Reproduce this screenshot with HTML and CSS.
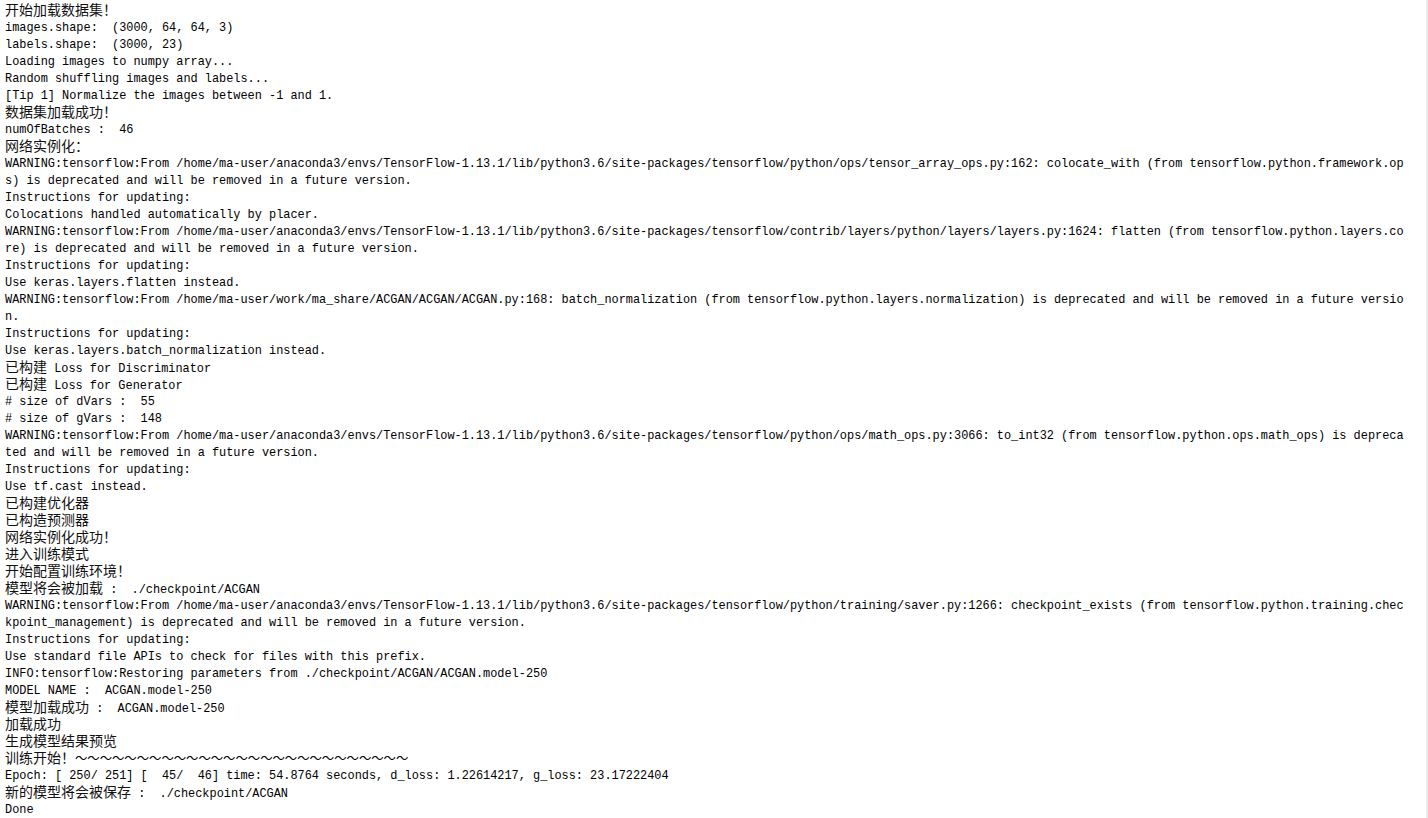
FILE: index.html
```html
<!DOCTYPE html>
<html lang="zh">
<head>
<meta charset="utf-8">
<title>Output</title>
<link rel="stylesheet" href="styles.css">
</head>
<body>
<div class="page">
  <div class="output">
    <div class="ln"><span class="zh">开始加载数据集！</span></div>
    <div class="ln">images.shape:  (3000, 64, 64, 3)</div>
    <div class="ln">labels.shape:  (3000, 23)</div>
    <div class="ln">Loading images to numpy array...</div>
    <div class="ln">Random shuffling images and labels...</div>
    <div class="ln">[Tip 1] Normalize the images between -1 and 1.</div>
    <div class="ln"><span class="zh">数据集加载成功！</span></div>
    <div class="ln">numOfBatches :  46</div>
    <div class="ln"><span class="zh">网络实例化：</span></div>
    <div class="ln">WARNING:tensorflow:From /home/ma-user/anaconda3/envs/TensorFlow-1.13.1/lib/python3.6/site-packages/tensorflow/python/ops/tensor_array_ops.py:162: colocate_with (from tensorflow.python.framework.op</div>
    <div class="ln">s) is deprecated and will be removed in a future version.</div>
    <div class="ln">Instructions for updating:</div>
    <div class="ln">Colocations handled automatically by placer.</div>
    <div class="ln">WARNING:tensorflow:From /home/ma-user/anaconda3/envs/TensorFlow-1.13.1/lib/python3.6/site-packages/tensorflow/contrib/layers/python/layers/layers.py:1624: flatten (from tensorflow.python.layers.co</div>
    <div class="ln">re) is deprecated and will be removed in a future version.</div>
    <div class="ln">Instructions for updating:</div>
    <div class="ln">Use keras.layers.flatten instead.</div>
    <div class="ln">WARNING:tensorflow:From /home/ma-user/work/ma_share/ACGAN/ACGAN/ACGAN.py:168: batch_normalization (from tensorflow.python.layers.normalization) is deprecated and will be removed in a future versio</div>
    <div class="ln">n.</div>
    <div class="ln">Instructions for updating:</div>
    <div class="ln">Use keras.layers.batch_normalization instead.</div>
    <div class="ln"><span class="zh">已构建</span> Loss for Discriminator</div>
    <div class="ln"><span class="zh">已构建</span> Loss for Generator</div>
    <div class="ln"># size of dVars :  55</div>
    <div class="ln"># size of gVars :  148</div>
    <div class="ln">WARNING:tensorflow:From /home/ma-user/anaconda3/envs/TensorFlow-1.13.1/lib/python3.6/site-packages/tensorflow/python/ops/math_ops.py:3066: to_int32 (from tensorflow.python.ops.math_ops) is depreca</div>
    <div class="ln">ted and will be removed in a future version.</div>
    <div class="ln">Instructions for updating:</div>
    <div class="ln">Use tf.cast instead.</div>
    <div class="ln"><span class="zh">已构建优化器</span></div>
    <div class="ln"><span class="zh">已构造预测器</span></div>
    <div class="ln"><span class="zh">网络实例化成功！</span></div>
    <div class="ln"><span class="zh">进入训练模式</span></div>
    <div class="ln"><span class="zh">开始配置训练环境！</span></div>
    <div class="ln"><span class="zh">模型将会被加载</span> :  ./checkpoint/ACGAN</div>
    <div class="ln">WARNING:tensorflow:From /home/ma-user/anaconda3/envs/TensorFlow-1.13.1/lib/python3.6/site-packages/tensorflow/python/training/saver.py:1266: checkpoint_exists (from tensorflow.python.training.chec</div>
    <div class="ln">kpoint_management) is deprecated and will be removed in a future version.</div>
    <div class="ln">Instructions for updating:</div>
    <div class="ln">Use standard file APIs to check for files with this prefix.</div>
    <div class="ln">INFO:tensorflow:Restoring parameters from ./checkpoint/ACGAN/ACGAN.model-250</div>
    <div class="ln">MODEL NAME :  ACGAN.model-250</div>
    <div class="ln"><span class="zh">模型加载成功</span> :  ACGAN.model-250</div>
    <div class="ln"><span class="zh">加载成功</span></div>
    <div class="ln"><span class="zh">生成模型结果预览</span></div>
    <div class="ln"><span class="zh">训练开始！</span><span class="tilde">～～～～～～～～～～～～～～～～～～～～～～～～～～～</span></div>
    <div class="ln">Epoch: [ 250/ 251] [  45/  46] time: 54.8764 seconds, d_loss: 1.22614217, g_loss: 23.17222404</div>
    <div class="ln"><span class="zh">新的模型将会被保存</span> :  ./checkpoint/ACGAN</div>
    <div class="ln">Done</div>
  </div>
  <div class="track"></div>
</div>
</body>
</html>
```

FILE: styles.css
```css
html, body {
  margin: 0;
  padding: 0;
  background: #ffffff;
}

.page {
  display: flex;
  width: 1428px;
  height: 818px;
  overflow: hidden;
}

.output {
  flex: 1;
  padding: 3px 0 0 5px;
  font-family: "Liberation Mono", "DejaVu Sans Mono", monospace;
  font-size: 11.9px;
  color: #000000;
}

.ln {
  height: 17px;
  line-height: 17px;
  white-space: pre;
}

.zh {
  font-family: "Noto Sans CJK SC", sans-serif;
  font-size: 14px;
  line-height: 12px;
  color: #111111;
}

.tilde {
  font-family: "Noto Sans CJK SC", sans-serif;
  font-size: 12.35px;
  line-height: 12px;
}

.track {
  width: 2px;
  flex: 0 0 2px;
  background: #ececec;
}
```
